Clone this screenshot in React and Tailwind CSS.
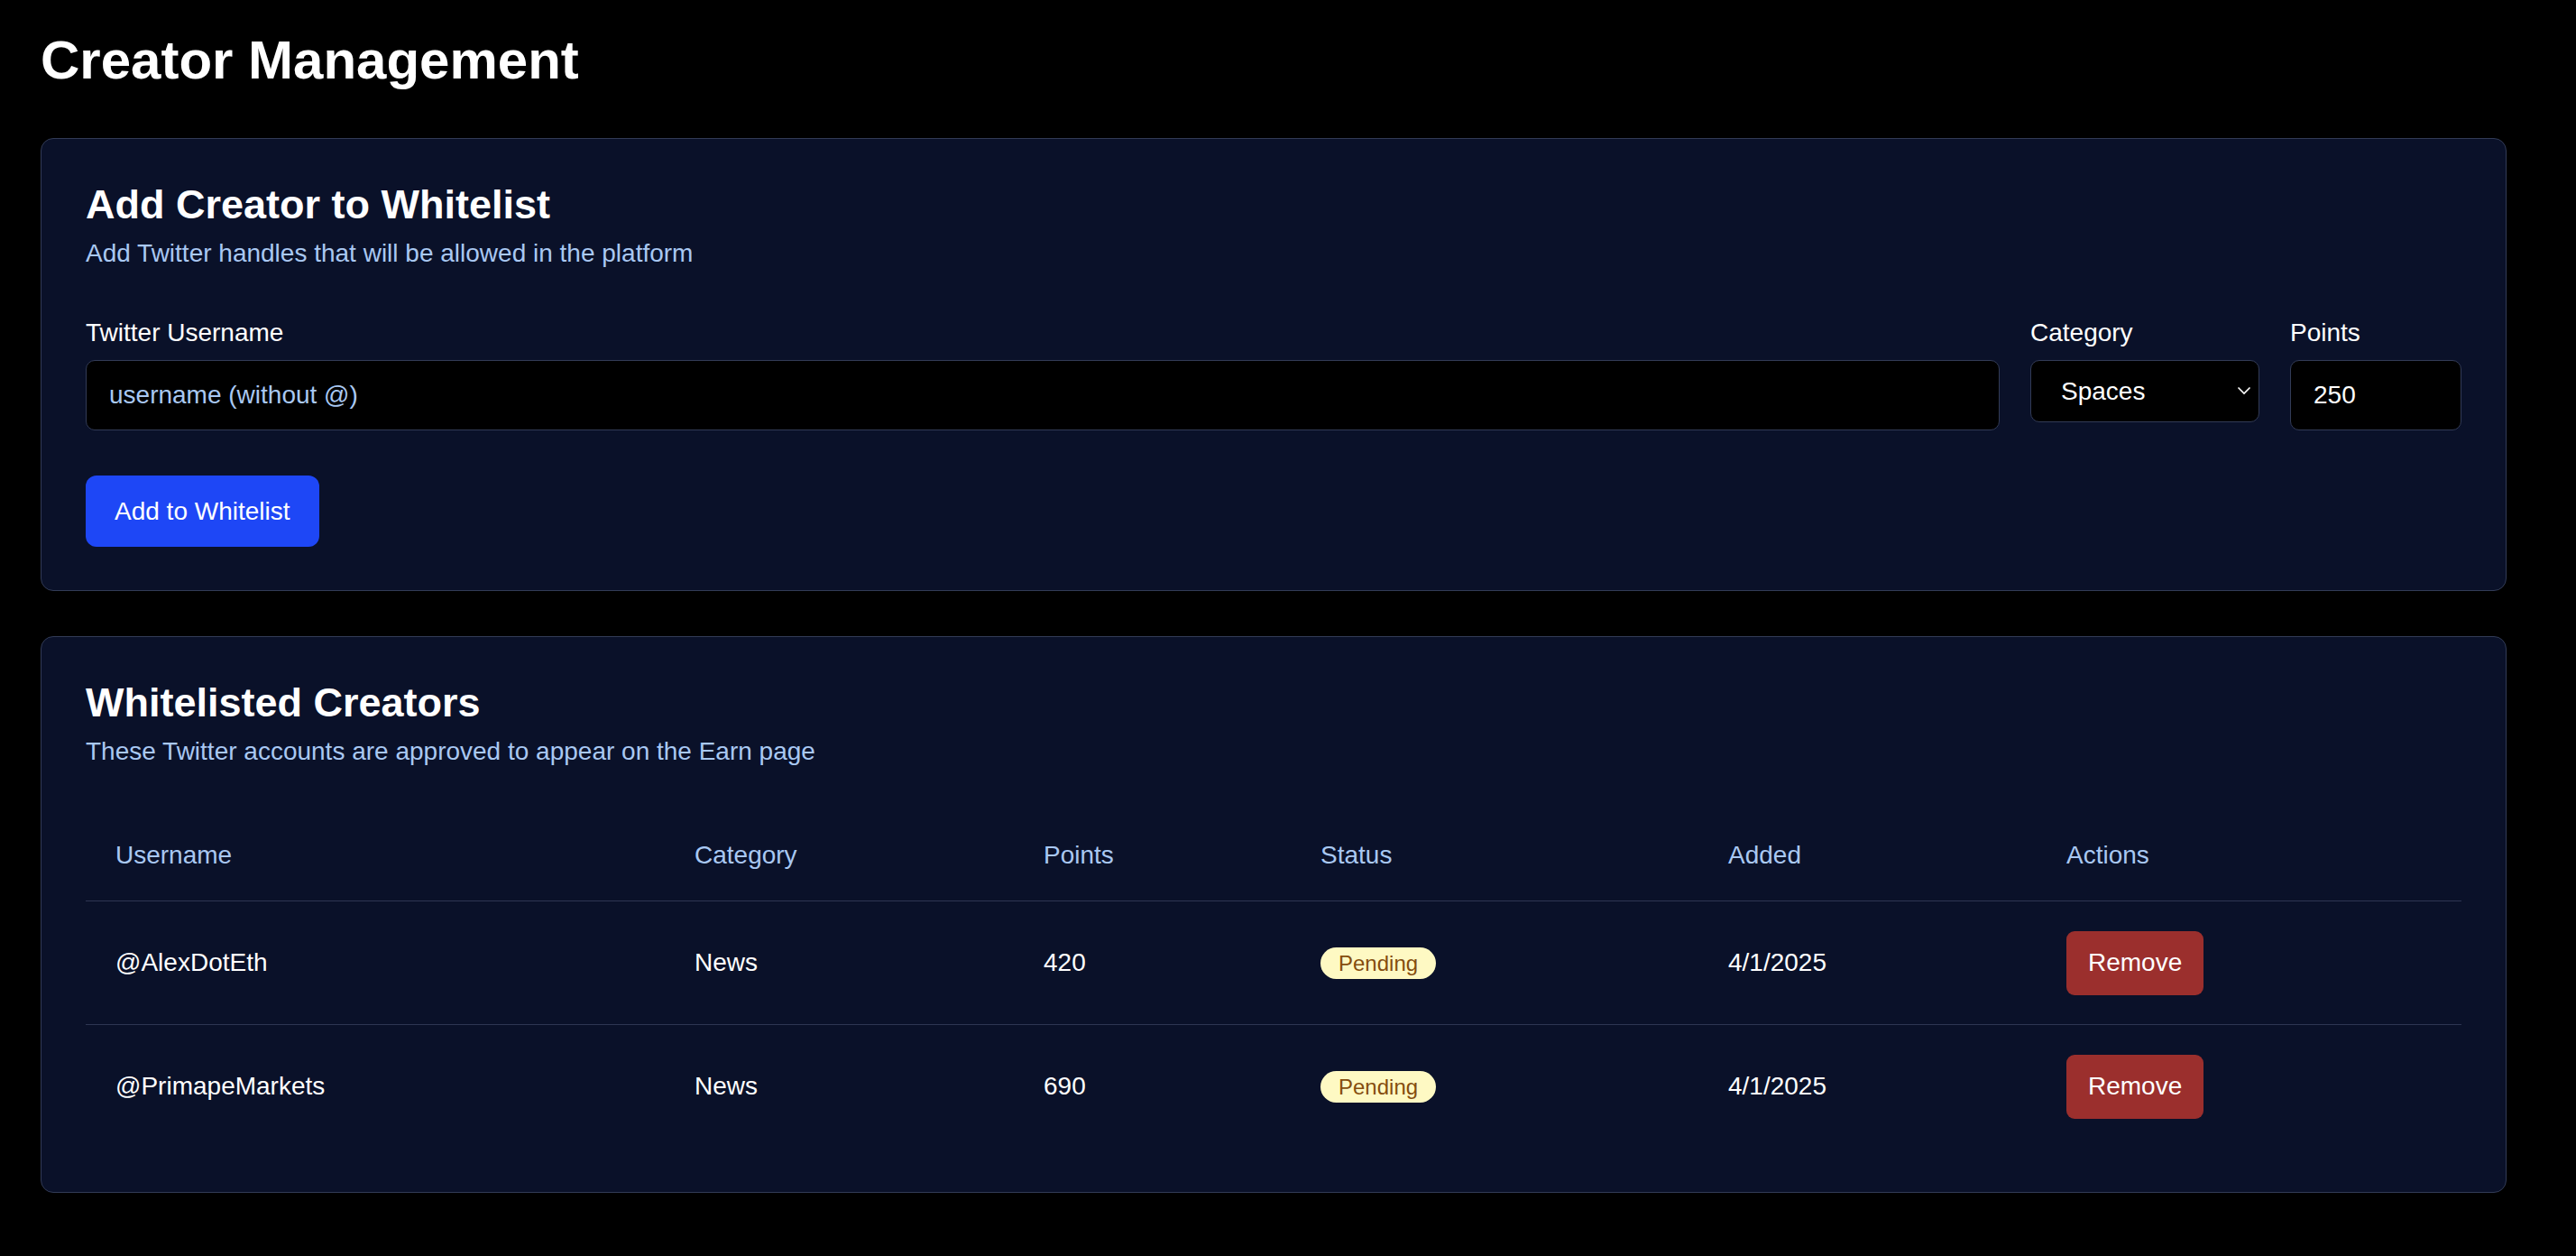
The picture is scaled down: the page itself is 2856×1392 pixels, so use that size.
import { useState } from "react";

const creators = [
  { username: "AlexDotEth", category: "News", points: 420, status: "Pending", added: "4/1/2025" },
  { username: "PrimapeMarkets", category: "News", points: 690, status: "Pending", added: "4/1/2025" },
];

const columns = [
  { label: "Username", width: "w-[642px]" },
  { label: "Category", width: "w-[387px]" },
  { label: "Points", width: "w-[307px]" },
  { label: "Status", width: "w-[452px]" },
  { label: "Added", width: "w-[375px]" },
  { label: "Actions", width: "w-[471px]" },
];

// Thin chevron drawn next to the native select (appearance is reset)
function Chevron() {
  return (
    <svg
      className="pointer-events-none absolute right-[9px] top-[29px]"
      width="16"
      height="10"
      viewBox="0 0 16 10"
      fill="none"
    >
      <polyline points="1.5,1.5 8,8 14.5,1.5" stroke="#ffffff" strokeWidth="1.6" />
    </svg>
  );
}

const CreatorManagement = () => {
  const [username, setUsername] = useState("");
  const [category, setCategory] = useState("Spaces");
  const [points, setPoints] = useState("250");
  const [list, setList] = useState(creators);

  const handleAdd = () => {
    const name = username.trim().replace(/^@/, "");
    if (!name) return;
    setList([
      ...list,
      { username: name, category, points: Number(points) || 0, status: "Pending", added: "4/1/2025" },
    ]);
    setUsername("");
  };

  const handleRemove = (name) => setList(list.filter((c) => c.username !== name));

  return (
    <div className="min-h-screen bg-black text-white pl-[45px] pr-[77px] pt-[31px] pb-[70px] font-['Liberation_Sans',Arial,sans-serif]">
      <h1 className="text-[60px] leading-[72px] font-bold">Creator Management</h1>

      <section className="mt-[50px] rounded-[14px] border border-[#323b56] bg-[#0a1129] px-[49px] pt-[46px] pb-[48px]">
        <h2 className="text-[45px] leading-[54px] font-bold">Add Creator to Whitelist</h2>
        <p className="mt-[6px] text-[28px] leading-[42px] text-[#a9c8f2]">
          Add Twitter handles that will be allowed in the platform
        </p>

        <div className="mt-[46px] flex items-start gap-[34px]">
          <div className="flex-1">
            <label className="block text-[28px] leading-[42px] text-white">Twitter Username</label>
            <input
              type="text"
              placeholder="username (without @)"
              value={username}
              onChange={(e) => setUsername(e.target.value)}
              className="mt-[9px] h-[78px] w-full rounded-[10px] border border-[#323b56] bg-black px-[25px] text-[28px] text-white outline-none placeholder:text-[#a9c8f2]"
            />
          </div>

          <div className="w-[254px]">
            <label className="block text-[28px] leading-[42px] text-white">Category</label>
            <div className="relative mt-[9px]">
              <select
                value={category}
                onChange={(e) => setCategory(e.target.value)}
                className="h-[69px] w-full appearance-none rounded-[10px] border border-[#323b56] bg-black pl-[33px] pr-[30px] text-[28px] text-white outline-none"
              >
                <option>Spaces</option>
                <option>News</option>
                <option>Podcasts</option>
              </select>
              <Chevron />
            </div>
          </div>

          <div className="w-[190px]">
            <label className="block text-[28px] leading-[42px] text-white">Points</label>
            <input
              type="text"
              value={points}
              onChange={(e) => setPoints(e.target.value)}
              className="mt-[9px] h-[78px] w-full rounded-[10px] border border-[#323b56] bg-black px-[25px] text-[28px] text-white outline-none"
            />
          </div>
        </div>

        <button
          onClick={handleAdd}
          className="mt-[50px] h-[79px] rounded-[12px] bg-[#1e47f6] px-[32px] text-[28px] text-white"
        >
          Add to Whitelist
        </button>
      </section>

      <section className="mt-[50px] rounded-[14px] border border-[#323b56] bg-[#0a1129] px-[49px] pt-[46px] pb-[48px]">
        <h2 className="text-[45px] leading-[54px] font-bold">Whitelisted Creators</h2>
        <p className="mt-[6px] text-[28px] leading-[42px] text-[#a9c8f2]">
          These Twitter accounts are approved to appear on the Earn page
        </p>

        <table className="mt-[44px] w-full table-fixed border-collapse text-left">
          <thead>
            <tr className="border-b border-[#2e3652]">
              {columns.map((col) => (
                <th
                  key={col.label}
                  className={`${col.width} pl-[33px] pt-[29px] pb-[29px] text-[28px] leading-[42px] font-normal text-[#a9c8f2]`}
                >
                  {col.label}
                </th>
              ))}
            </tr>
          </thead>
          <tbody>
            {list.map((c, i) => (
              <tr key={c.username} className={i < list.length - 1 ? "border-b border-[#2e3652]" : ""}>
                <td className="h-[137px] pl-[33px] text-[28px] leading-[42px]">@{c.username}</td>
                <td className="pl-[33px] text-[28px] leading-[42px]">{c.category}</td>
                <td className="pl-[33px] text-[28px] leading-[42px]">{c.points}</td>
                <td className="pl-[33px]">
                  <span className="inline-block h-[35px] rounded-full bg-[#fef9c3] px-[20px] text-[24px] leading-[35px] text-[#854d0e]">
                    {c.status}
                  </span>
                </td>
                <td className="pl-[33px] text-[28px] leading-[42px]">{c.added}</td>
                <td className="pl-[33px]">
                  <button
                    onClick={() => handleRemove(c.username)}
                    className="h-[71px] rounded-[9px] bg-[#9b2f2d] px-[24px] text-[28px] text-white"
                  >
                    Remove
                  </button>
                </td>
              </tr>
            ))}
          </tbody>
        </table>
      </section>
    </div>
  );
};

export default CreatorManagement;
